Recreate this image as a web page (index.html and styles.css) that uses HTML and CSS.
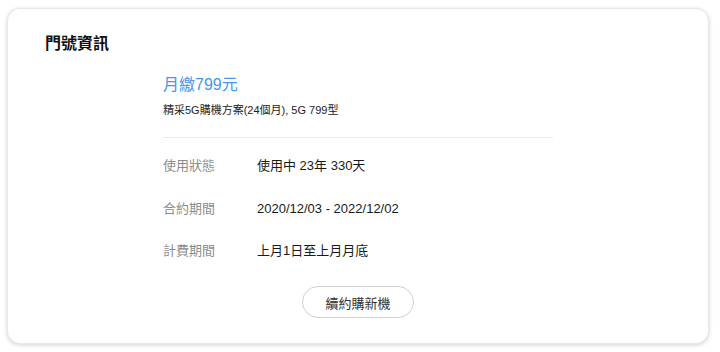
FILE: index.html
```html
<!DOCTYPE html>
<html lang="zh-Hant">

<head>
    <meta charset="UTF-8">
    <meta name="viewport" content="width=device-width, initial-scale=1.0">
    <title>門號資訊</title>
    <link rel="stylesheet" href="styles.css">
</head>

<body>
    <div class="card">
        <h2 class="title">門號資訊</h2>
        <div class="content">
            <div class="price">月繳799元</div>
            <div class="plan">精采5G購機方案(24個月), 5G 799型</div>
            <hr>
            <div class="rows">
                <div class="row">
                    <span class="label">使用狀態</span>
                    <span class="value">使用中 23年 330天</span>
                </div>
                <div class="row">
                    <span class="label">合約期間</span>
                    <span class="value">2020/12/03 - 2022/12/02</span>
                </div>
                <div class="row">
                    <span class="label">計費期間</span>
                    <span class="value">上月1日至上月月底</span>
                </div>
            </div>
            <button class="renew" type="button">續約購新機</button>
        </div>
    </div>
</body>

</html>
```

FILE: styles.css
```css
body {
    margin: 0;
    padding: 8px 11px 8px 7px;
    background: #fff;
    font-family: "Liberation Sans", "Noto Sans CJK TC", sans-serif;
    color: #222;
}

.card {
    box-sizing: border-box;
    height: 336px;
    background: #fff;
    border: 1px solid #e8e8e8;
    border-radius: 13px;
    box-shadow: 0 1px 4px rgba(0, 0, 0, 0.18);
    padding: 24px 37px 0;
}

.title {
    margin: 0;
    font-size: 16px;
    line-height: 22px;
    font-weight: 700;
    color: #111;
}

.content {
    margin: 18px 0 0 118px;
    width: 390px;
}

.price {
    font-size: 16px;
    line-height: 24px;
    color: #4696ee;
}

.plan {
    margin-top: 4px;
    font-size: 11px;
    line-height: 18px;
    color: #222;
}

hr {
    margin: 18px 0 0;
    border: none;
    border-top: 1px solid #ebebeb;
}

.rows {
    display: flex;
    flex-direction: column;
    gap: 22.5px;
    margin-top: 18px;
}

.row {
    display: flex;
    font-size: 13px;
    line-height: 20px;
}

.label {
    width: 94px;
    color: #8c8c8c;
}

.value {
    color: #1a1a1a;
}

.renew {
    display: block;
    margin: 25px auto 0;
    width: 112px;
    height: 32px;
    border: 1px solid #d0d0d0;
    border-radius: 16px;
    background: #fff;
    font-family: inherit;
    font-size: 13px;
    color: #333;
    padding: 0;
}
```
